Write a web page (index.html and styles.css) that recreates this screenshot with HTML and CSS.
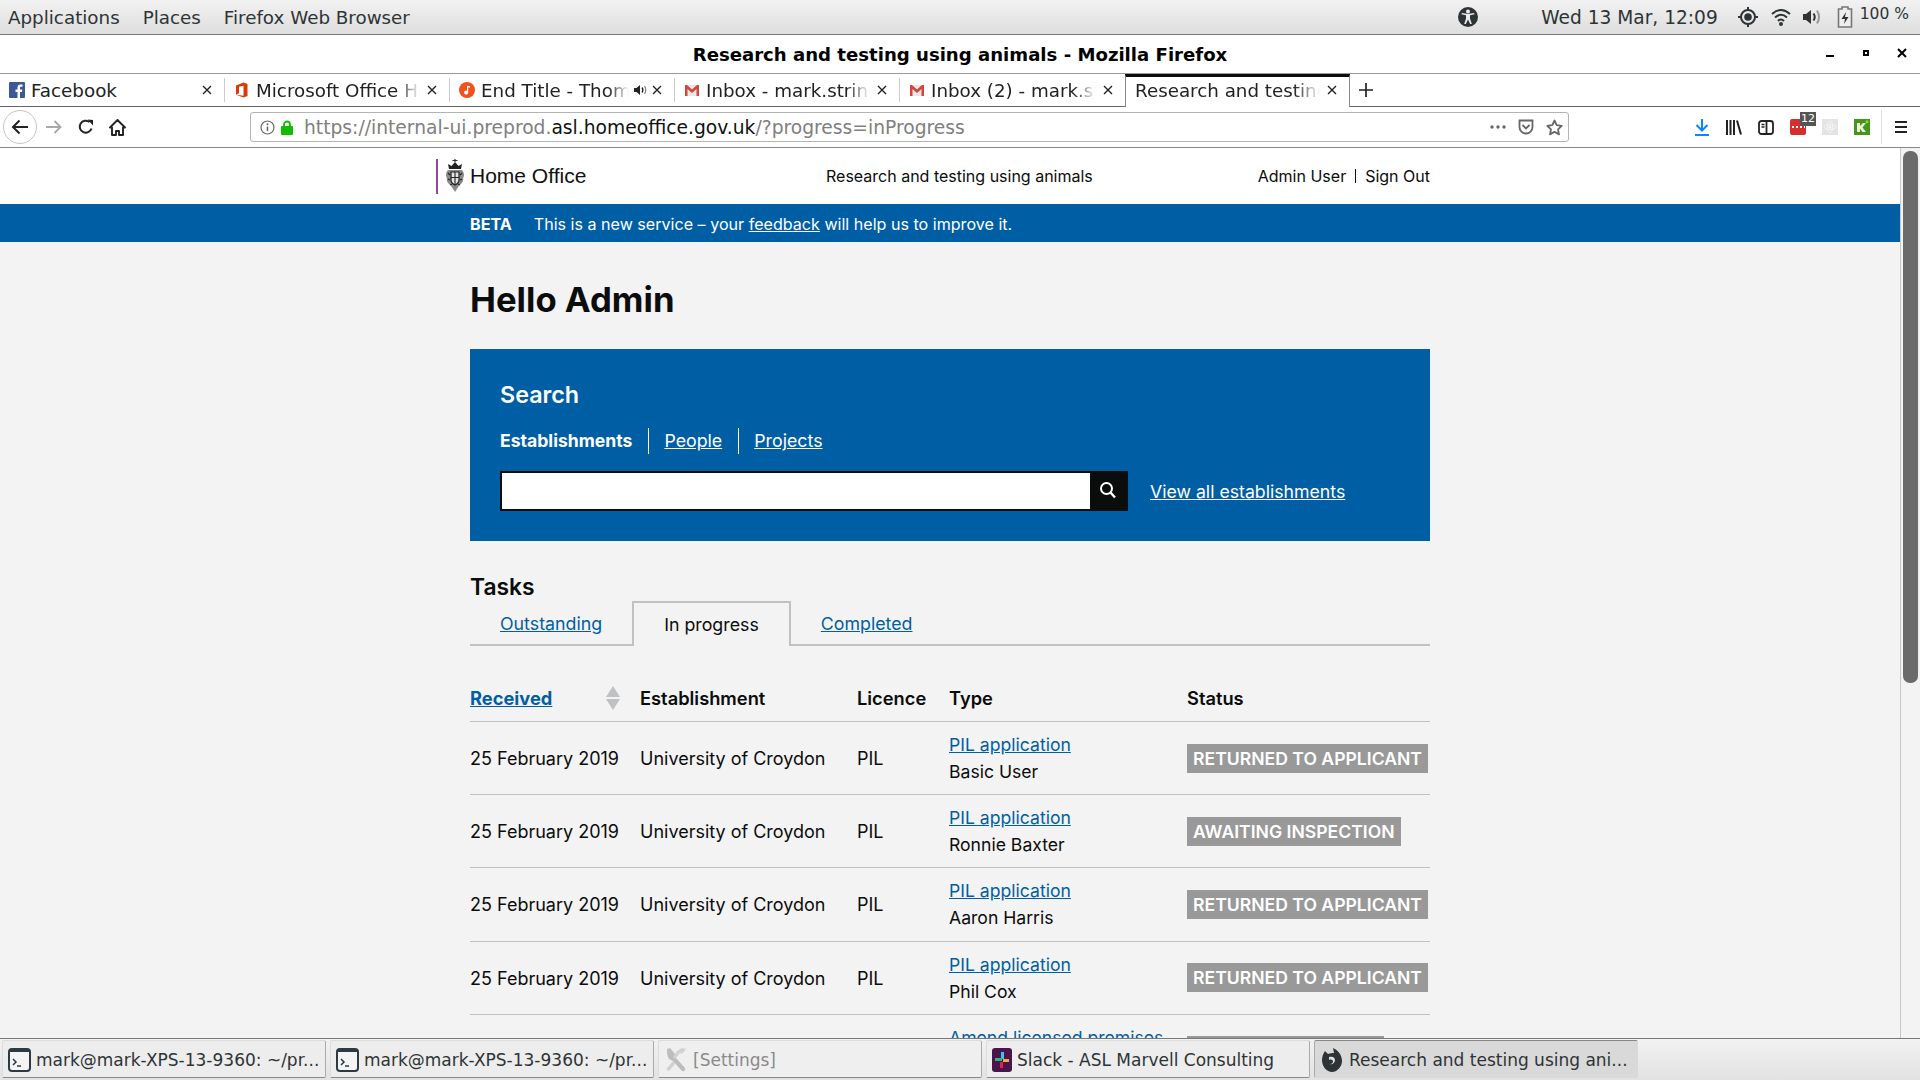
FILE: index.html
```html
<!DOCTYPE html>
<html lang="en">
<head>
<meta charset="utf-8">
<title>Research and testing using animals - Mozilla Firefox</title>
<link rel="stylesheet" href="styles.css">
</head>
<body>
<div class="desktop">
  <div class="panel">
    <div class="panel-menu"><span>Applications</span><span>Places</span><span>Firefox Web Browser</span></div>
    <div class="tray">
      <svg class="t-a11y" width="22" height="22" viewBox="0 0 22 22"><circle cx="11" cy="11" r="10" fill="#2e3436"/><circle cx="11" cy="5.6" r="2" fill="#eee"/><path d="M4.5 8.2 L9 9.3 V12.5 L7.2 18 H8.8 L11 13.5 L13.2 18 H14.8 L13 12.5 V9.3 L17.5 8.2 L17.2 7 L11 8 L4.8 7 Z" fill="#eee"/></svg>
      <span class="clock">Wed 13 Mar, 12:09</span>
      <svg class="t-loc" width="20" height="22" viewBox="0 0 20 22"><circle cx="10" cy="11" r="7" fill="none" stroke="#2e3436" stroke-width="2"/><circle cx="10" cy="11" r="3.8" fill="#2e3436"/><path d="M10 1v3M10 18v3M0 11h3M17 11h3" stroke="#2e3436" stroke-width="2"/></svg>
      <svg class="t-wifi" width="20" height="20" viewBox="0 0 20 20"><path d="M1 7 Q10 -1 19 7" fill="none" stroke="#2e3436" stroke-width="2"/><path d="M4 10.5 Q10 5 16 10.5" fill="none" stroke="#2e3436" stroke-width="2"/><path d="M7 14 Q10 11 13 14" fill="none" stroke="#2e3436" stroke-width="2"/><circle cx="10" cy="17" r="2" fill="#2e3436"/></svg>
      <svg class="t-vol" width="20" height="20" viewBox="0 0 20 20"><path d="M1 7h3l5-4v14l-5-4H1z" fill="#2e3436"/><path d="M11.5 6.5Q14 10 11.5 13.5" fill="none" stroke="#2e3436" stroke-width="2"/><path d="M15 3.5Q19 10 15 16.5" fill="none" stroke="#999" stroke-width="2"/></svg>
      <svg class="t-bat" width="16" height="22" viewBox="0 0 16 22"><path d="M5 1h6v2h3.5v18h-13V3H5z" fill="#eee" stroke="#777" stroke-width="1.6"/><path d="M9 6 4.5 13H8l-1 5 4.5-7H8z" fill="#2e3436"/></svg>
      <span class="battery">100 %</span>
    </div>
  </div>

  <div class="titlebar">
    <span class="title">Research and testing using animals - Mozilla Firefox</span>
    <div class="win-controls">
      <svg width="10" height="10" viewBox="0 0 10 10"><rect x="1" y="7" width="8" height="2" fill="#000"/></svg>
      <svg width="10" height="10" viewBox="0 0 10 10"><path d="M2 2h6v6H2z M4 4v2h2V4z" fill="#000" fill-rule="evenodd"/></svg>
      <svg width="10" height="10" viewBox="0 0 10 10"><path d="M1 1 9 9M9 1 1 9" stroke="#000" stroke-width="2"/></svg>
    </div>
  </div>

  <div class="tabstrip">
    <div class="tab"><div class="tab-in">
      <svg class="fav" width="16" height="16" viewBox="0 0 16 16"><rect width="16" height="16" rx="1" fill="#3b5998"/><path d="M11 16V10h2l.4-2.5H11V6c0-.8.3-1.2 1.2-1.2h1.3V2.5h-2C9.500 2.500 8.500 3.700 8.500 5.600v1.900H6.500V10h2v6z" fill="#fff"/></svg>
      <span class="tab-label">Facebook</span>
      <svg class="x" width="12" height="12" viewBox="0 0 12 12"><path d="M2 2l8 8M10 2l-8 8" stroke="#222" stroke-width="1.4"/></svg>
    </div></div>
    <div class="tab"><div class="tab-in">
      <svg class="fav" width="16" height="16" viewBox="0 0 16 16"><path d="M2 3.500 9.500 .5 13.500 2v12l-4 1.500L2 12.700l7.500 1V3.800L5 4.800v6.500L2 12.700z" fill="#d83b01"/></svg>
      <span class="tab-label fade">Microsoft Office Home</span>
      <svg class="x" width="12" height="12" viewBox="0 0 12 12"><path d="M2 2l8 8M10 2l-8 8" stroke="#222" stroke-width="1.4"/></svg>
    </div></div>
    <div class="tab"><div class="tab-in">
      <svg class="fav" width="16" height="16" viewBox="0 0 16 16"><circle cx="8" cy="8" r="8" fill="#f0521e"/><path d="M8 4h3v1.600H9.200v5a2 2 0 1 1-1.200-1.800z" fill="#fff"/></svg>
      <span class="tab-label fade">End Title - Thomas Newman</span>
      <svg class="speaker" width="14" height="14" viewBox="0 0 14 14"><path d="M0 5h2.500L6 2v10L2.500 9H0z" fill="#222"/><path d="M8 4.500Q9.800 7 8 9.500" fill="none" stroke="#222" stroke-width="1.300"/><path d="M10.500 3Q13 7 10.500 11" fill="none" stroke="#888" stroke-width="1.300"/></svg>
      <svg class="x x-tight" width="12" height="12" viewBox="0 0 12 12"><path d="M2 2l8 8M10 2l-8 8" stroke="#222" stroke-width="1.4"/></svg>
    </div></div>
    <div class="tab"><div class="tab-in">
      <svg class="fav" width="16" height="16" viewBox="0 0 16 16"><rect x="1" y="3" width="14" height="11" fill="#e8e8e8"/><path d="M1 14V3h2l5 4.500L13 3h2v11h-2.500V7L8 11 3.500 7v7z" fill="#d44638"/></svg>
      <span class="tab-label fade">Inbox - mark.stringer@</span>
      <svg class="x" width="12" height="12" viewBox="0 0 12 12"><path d="M2 2l8 8M10 2l-8 8" stroke="#222" stroke-width="1.4"/></svg>
    </div></div>
    <div class="tab"><div class="tab-in">
      <svg class="fav" width="16" height="16" viewBox="0 0 16 16"><rect x="1" y="3" width="14" height="11" fill="#e8e8e8"/><path d="M1 14V3h2l5 4.500L13 3h2v11h-2.500V7L8 11 3.500 7v7z" fill="#d44638"/></svg>
      <span class="tab-label fade">Inbox (2) - mark.stringer</span>
      <svg class="x" width="12" height="12" viewBox="0 0 12 12"><path d="M2 2l8 8M10 2l-8 8" stroke="#222" stroke-width="1.4"/></svg>
    </div></div>
    <div class="tab active"><div class="tab-in">
      <span class="tab-label fade">Research and testing using animals</span>
      <svg class="x" width="12" height="12" viewBox="0 0 12 12"><path d="M2 2l8 8M10 2l-8 8" stroke="#222" stroke-width="1.4"/></svg>
    </div></div>
    <svg class="plus" width="16" height="16" viewBox="0 0 16 16"><path d="M8 1v14M1 8h14" stroke="#222" stroke-width="1.7"/></svg>
  </div>

  <div class="navbar">
    <div class="nav-back"><svg width="18" height="16" viewBox="0 0 18 16"><path d="M17 8H2M8.500 1.500 2 8l6.500 6.500" fill="none" stroke="#222" stroke-width="2"/></svg></div>
    <div class="nav-btn"><svg width="16" height="14" viewBox="0 0 16 14"><path d="M0 7h14M8.500 1 14.500 7l-6 6" fill="none" stroke="#a8a8a8" stroke-width="1.800"/></svg></div>
    <div class="nav-btn"><svg width="16" height="16" viewBox="0 0 16 16"><path d="M13.500 9.500A6 6 0 1 1 11.500 3" fill="none" stroke="#222" stroke-width="2"/><path d="M9.500 .5 15 1v5.500z" fill="#222"/></svg></div>
    <div class="nav-btn"><svg width="17" height="17" viewBox="0 0 17 17"><path d="M8.500 1 1 8.500h2V16h4v-4h3v4h4V8.500h2z" fill="none" stroke="#222" stroke-width="1.900" stroke-linejoin="round"/></svg></div>
    <div class="urlbar">
      <svg class="u-info" width="15" height="15" viewBox="0 0 15 15"><circle cx="7.500" cy="7.500" r="6.500" fill="none" stroke="#666" stroke-width="1.200"/><path d="M7.500 6.500v4.500" stroke="#666" stroke-width="1.500"/><circle cx="7.500" cy="4.300" r="1" fill="#666"/></svg>
      <svg class="u-lock" width="12" height="15" viewBox="0 0 12 15"><path d="M3 6.500V4.500a3 3 0 0 1 6 0v2" fill="none" stroke="#12bc00" stroke-width="1.800"/><rect y="6" width="12" height="9" rx="1" fill="#12bc00"/></svg>
      <span class="url"><span class="dim">https://internal-ui.preprod.</span>asl.homeoffice.gov.uk<span class="dim">/?progress=inProgress</span></span>
      <div class="u-act"><svg width="16" height="4" viewBox="0 0 16 4"><circle cx="2" cy="2" r="1.700" fill="#666"/><circle cx="8" cy="2" r="1.700" fill="#666"/><circle cx="14" cy="2" r="1.700" fill="#666"/></svg></div>
      <div class="u-act"><svg width="16" height="16" viewBox="0 0 16 16"><path d="M1.500 1.500h13V8a6.500 6.500 0 0 1-13 0z" fill="none" stroke="#666" stroke-width="1.800"/><path d="M4.500 6 8 9.500 11.500 6" fill="none" stroke="#666" stroke-width="1.800"/></svg></div>
      <div class="u-act"><svg width="17" height="17" viewBox="0 0 17 17"><path d="M8.500 1.500l2.200 4.700 5 .6-3.700 3.500 1 5.100-4.500-2.600L4 15.400l1-5.100L1.300 6.800l5-.6z" fill="none" stroke="#666" stroke-width="1.800" stroke-linejoin="round"/></svg></div>
    </div>
    <div class="tool first"><svg width="16" height="17" viewBox="0 0 16 17"><path d="M8 0v11M2.500 6 8 11.500 13.500 6" fill="none" stroke="#0a84ff" stroke-width="2"/><path d="M1 16h14" stroke="#0a84ff" stroke-width="2"/></svg></div>
    <div class="tool"><svg width="16" height="15" viewBox="0 0 16 15"><path d="M1 0v15M4.500 0v15M8 0v15M11 .500 15 14.500" stroke="#222" stroke-width="2" fill="none"/></svg></div>
    <div class="tool"><svg width="16" height="15" viewBox="0 0 16 15"><rect x="1" y="1" width="14" height="13" rx="2.500" fill="none" stroke="#222" stroke-width="1.800"/><path d="M8.500 1v13" stroke="#222" stroke-width="1.800"/><path d="M3.500 4.500h3M3.500 7h3" stroke="#222" stroke-width="1.300"/></svg></div>
    <div class="tool ext">
      <svg width="16" height="16" viewBox="0 0 16 16"><rect width="16" height="16" rx="2" fill="#d32f2f"/><path d="M2 8h2M6 8h2M10 8h2M14 8h1" stroke="#fff" stroke-width="2"/></svg>
      <span class="badge12">12</span>
    </div>
    <div class="tool"><svg width="16" height="16" viewBox="0 0 16 16"><rect width="16" height="16" fill="#e4e4e4"/><ellipse cx="8" cy="8" rx="6" ry="2.500" fill="none" stroke="#f4f4f4"/><ellipse cx="8" cy="8" rx="2.500" ry="6" fill="none" stroke="#f4f4f4"/><circle cx="8" cy="8" r="1.500" fill="#f4f4f4"/></svg></div>
    <div class="tool"><svg width="16" height="16" viewBox="0 0 16 16"><rect width="16" height="16" fill="#46961e"/><path d="M3 4h3v3l3-3h3L8.500 8.500 12 13H8.500L6 9.500V13H3z" fill="#e8f5d8"/><circle cx="13" cy="2.700" r="1.500" fill="#7fe030"/></svg></div>
    <div class="tool-sep"></div>
    <div class="tool"><svg width="14" height="14" viewBox="0 0 14 14"><path d="M1 2h12M1 7h12M1 12h12" stroke="#222" stroke-width="2"/></svg></div>
  </div>

  <div class="viewport">
    <div class="page">
      <header class="site-head">
        <div class="site-head-in">
          <div class="logo">
            <svg class="crest" width="18" height="34" viewBox="0 0 18 34">
              <path d="M9 0v3M6.500 1.500h5" stroke="#333" stroke-width="1.200"/>
              <path d="M3 10 2 5l3.500 2L9 3l3.500 4L16 5l-1 5z" fill="#222"/>
              <path d="M2 11h14c2.500 3 2.500 6 1 8 1 3-1 6-3.500 7L9 33l-4.500-7C2 25 0 22 1 19c-1.500-2-1.500-5 1-8z" fill="#8a8a8a"/>
              <path d="M5 13h8v8c0 2.500-2 4-4 5-2-1-4-2.500-4-5z" fill="#e4e4e4" stroke="#222" stroke-width="1.200"/>
              <path d="M9 13v13M5 18.500h8M2 14l2 2M16 14l-2 2M2 20l2 1M16 20l-2 1M4 26l2-1M14 26l-2-1" stroke="#222" stroke-width="1.100"/>
            </svg>
            <span class="logo-text">Home Office</span>
          </div>
          <div class="service">Research and testing using animals</div>
          <div class="user"><span>Admin User</span><span class="user-sep">Sign Out</span></div>
        </div>
      </header>
      <div class="beta">
        <div class="beta-in"><strong>BETA</strong><span>This is a new service – your <a href="#">feedback</a> will help us to improve it.</span></div>
      </div>
      <main class="content">
        <h1>Hello Admin</h1>
        <section class="search">
          <h2>Search</h2>
          <div class="search-tabs">
            <span class="on">Establishments</span>
            <a class="people" href="#">People</a>
            <a href="#">Projects</a>
          </div>
          <div class="search-row">
            <div class="search-input"></div>
            <div class="search-btn"><svg width="18" height="18" viewBox="0 0 18 18"><circle cx="7.500" cy="7.500" r="5.500" fill="none" stroke="#fff" stroke-width="2"/><path d="M11.500 11.500 16 16.500" stroke="#fff" stroke-width="2.400"/></svg></div>
            <a class="view-all" href="#">View all establishments</a>
          </div>
        </section>
        <h2 class="tasks">Tasks</h2>
        <nav class="tabs">
          <a href="#">Outstanding</a>
          <span class="cur">In progress</span>
          <a href="#">Completed</a>
        </nav>
        <table>
          <thead>
            <tr>
              <th class="c1"><div class="sort"><a href="#">Received</a><svg width="14" height="24" viewBox="0 0 14 24"><path d="M7 0 14 11H0zM7 24 0 13h14z" fill="#bfc1c3"/></svg></div></th>
              <th class="c2">Establishment</th>
              <th class="c3">Licence</th>
              <th class="c4">Type</th>
              <th class="c5">Status</th>
            </tr>
          </thead>
          <tbody>
            <tr><td>25 February 2019</td><td>University of Croydon</td><td>PIL</td><td class="type"><a href="#">PIL application</a><br>Basic User</td><td class="stat"><span class="status">RETURNED TO APPLICANT</span></td></tr>
            <tr><td>25 February 2019</td><td>University of Croydon</td><td>PIL</td><td class="type"><a href="#">PIL application</a><br>Ronnie Baxter</td><td class="stat"><span class="status">AWAITING INSPECTION</span></td></tr>
            <tr><td>25 February 2019</td><td>University of Croydon</td><td>PIL</td><td class="type"><a href="#">PIL application</a><br>Aaron Harris</td><td class="stat"><span class="status">RETURNED TO APPLICANT</span></td></tr>
            <tr><td>25 February 2019</td><td>University of Croydon</td><td>PIL</td><td class="type"><a href="#">PIL application</a><br>Phil Cox</td><td class="stat"><span class="status">RETURNED TO APPLICANT</span></td></tr>
            <tr class="cut"><td></td><td></td><td></td><td class="type"><a href="#">Amend licensed premises</a></td><td class="stat"><span class="status-cut"></span></td></tr>
          </tbody>
        </table>
      </main>
    </div>
    <div class="scrollbar"><div class="thumb"></div></div>
  </div>

  <div class="taskbar">
    <div class="task">
      <svg width="23" height="24" viewBox="0 0 23 24"><rect x="1" y="1" width="21" height="22" rx="3" fill="#f4f4f4" stroke="#2e3a42" stroke-width="2"/><rect x="1" y="1" width="21" height="3" fill="#2e3a42"/><path d="M5 11l3 3-3 3M9 18h4" fill="none" stroke="#2e3a42" stroke-width="1.500"/></svg>
      <span>mark@mark-XPS-13-9360: ~/pr...</span>
    </div>
    <div class="task">
      <svg width="23" height="24" viewBox="0 0 23 24"><rect x="1" y="1" width="21" height="22" rx="3" fill="#f4f4f4" stroke="#2e3a42" stroke-width="2"/><rect x="1" y="1" width="21" height="3" fill="#2e3a42"/><path d="M5 11l3 3-3 3M9 18h4" fill="none" stroke="#2e3a42" stroke-width="1.500"/></svg>
      <span>mark@mark-XPS-13-9360: ~/pr...</span>
    </div>
    <div class="task off">
      <svg width="24" height="26" viewBox="0 0 24 26"><path d="M3 2 6 1l5 6 1 4 9 10c1 2-1 4-3 3L9 14 5 12C3 9 3 5 3 2z" fill="#bdbdbd"/><path d="M22 2l-4 5-2-1-5 6-2-2 4-6 5-3zM9 14l2.500 2.500-6 7c-2 1-3.500-1-2.500-2.500z" fill="#d2d2d2"/></svg>
      <span>[Settings]</span>
    </div>
    <div class="task">
      <svg width="20" height="24" viewBox="0 0 20 24"><rect width="20" height="24" rx="3" fill="#4a154b"/><rect x="9" y="4" width="3" height="7" fill="#36c5f0"/><rect x="3" y="10" width="7" height="3" fill="#2eb67d"/><rect x="11" y="11" width="6" height="3" fill="#ecb22e"/><rect x="8" y="14" width="3" height="6" fill="#e01e5a"/></svg>
      <span>Slack - ASL Marvell Consulting</span>
    </div>
    <div class="task active">
      <svg width="24" height="26" viewBox="0 0 24 26"><path d="M5 4 8 7c2-1 4-1 6-1l-1-5c5 2 9 7 9 13 0 6-5 11-10 11S2 20 2 13c0-3 1-6 3-9z" fill="#2e3436"/><path d="M9 10c3-1 6 0 6 3s-3 5-5 4c2 0 3-1 3-2.500S11 12 9 13z" fill="#e0e0e0"/></svg>
      <span>Research and testing using ani...</span>
    </div>
  </div>
</div>
</body>
</html>
```
FILE: styles.css
```css
* { box-sizing: border-box; }
html, body { margin: 0; padding: 0; height: 100%; overflow: hidden; }
body { font-family: "DejaVu Sans", sans-serif; background: #fff; color: #0b0c0c; }
.desktop { width: 1920px; height: 1080px; display: flex; flex-direction: column; overflow: hidden; }

.panel { height: 35px; flex: none; display: flex; align-items: center; background: linear-gradient(#f2f2f2, #dedede); border-bottom: 1px solid #777; color: #2e3436; font-size: 18.3px; }
.panel-menu { display: flex; gap: 23px; padding-left: 8px; }
.tray { margin-left: auto; display: flex; align-items: center; }
.t-a11y { margin-right: 62px; }
.clock { margin-right: 20px; font-size: 18.6px; }
.t-wifi { margin-left: 13px; }
.t-vol { margin-left: 11px; }
.t-bat { margin-left: 15px; }
.battery { font-size: 15.5px; margin: -6px 11px 0 7px; }

.titlebar { height: 39px; flex: none; display: flex; align-items: center; justify-content: center; position: relative; border-bottom: 1px solid #999; padding-top: 1px; }
.title { font-weight: 700; font-size: 18.1px; color: #000; }
.win-controls { position: absolute; right: 13px; top: 13px; display: flex; gap: 26px; }

.tabstrip { height: 33px; flex: none; display: flex; border-bottom: 1px solid #666; background: #fff; font-size: 18.3px; color: #222; }
.tab { width: 225px; height: 32px; padding: 4px 0; }
.tab-in { height: 24px; display: flex; align-items: center; padding: 0 11px 0 9px; border-right: 1px solid #ccc; }
.tab:nth-child(5) .tab-in { border-right: 0; }
.tab.active { height: 33px; background: #fff; border-top: 3px solid #0c0c0c; border-left: 1px solid #888; border-right: 1px solid #888; padding: 1px 0 0; }
.tab.active .tab-in { border: 0; padding: 0 11px 0 9px; }
.fav { flex: none; margin-right: 6px; }
.tab-label { flex: 1; min-width: 0; overflow: hidden; white-space: nowrap; }
.fade { -webkit-mask-image: linear-gradient(to right, #000 86%, transparent 100%); mask-image: linear-gradient(to right, #000 86%, transparent 100%); }
.speaker { flex: none; margin: 0 0 0 5px; }
.x { flex: none; margin-left: 6px; }
.x-tight { margin-left: 3px; }
.plus { margin: 8px 0 0 8px; }

.navbar { height: 41px; flex: none; display: flex; align-items: center; border-bottom: 1px solid #888; background: #fff; }
.nav-back { width: 34px; height: 34px; margin-left: 3px; margin-right: 1px; border: 1px solid #c4c4c4; border-radius: 50%; display: flex; align-items: center; justify-content: center; }
.nav-btn { width: 32px; display: flex; justify-content: center; }
.nav-btn:nth-child(4) { margin-left: -1px; margin-right: 1px; }
.urlbar { flex: none; margin-left: 116px; height: 30px; width: 1319px; border: 1px solid #b4b4b4; border-radius: 3px; display: flex; align-items: center; font-size: 18.7px; }
.u-info { margin-left: 9px; flex: none; }
.u-lock { margin-left: 6px; flex: none; }
.url { margin-left: 11px; color: #111; white-space: nowrap; flex: 1; }
.dim { color: #808080; }
.u-act { width: 28px; flex: none; display: flex; justify-content: center; }
.tool { width: 32px; flex: none; display: flex; justify-content: center; position: relative; }
.tool.first { margin-left: 117px; }
.tool-sep { width: 1px; height: 34px; background: #ddd; margin: 0 3px 0 3px; flex: none; }
.badge12 { position: absolute; right: -2px; top: -7px; width: 16px; height: 14px; background: #555; color: #fff; font-size: 11px; line-height: 14px; text-align: center; }

.viewport { flex: 1; min-height: 0; display: flex; background: #f3f3f3; overflow: hidden; }
.page { flex: 1; min-width: 0; font-family: Inter, sans-serif; font-size: 16px; line-height: 26px; color: #0b0c0c; }
.scrollbar { width: 20px; flex: none; background: #f3f3f3; border-left: 1px solid #c8c8c8; padding: 3px 2px 0 2px; }
.thumb { height: 532px; width: 15px; background: #6b6b6b; border-radius: 7px; }
a { color: #005ea5; }

.site-head { height: 56px; background: #fff; }
.site-head-in { width: 994px; margin-left: 436px; height: 100%; display: grid; grid-template-columns: 390px 1fr auto; align-items: center; }
.logo { height: 35px; display: flex; align-items: center; border-left: 2px solid #8f4a9e; padding-left: 8px; }
.logo-text { font-family: "Liberation Sans", sans-serif; font-size: 21px; margin-left: 6px; color: #111; }
.user-sep { border-left: 1px solid #0b0c0c; margin-left: 9px; padding-left: 9px; }
.user { display: flex; align-items: center; line-height: 14px; }

.beta { height: 38px; background: #005ea5; color: #fff; font-size: 16.1px; padding-top: 1px; }
.beta-in { width: 960px; margin: 0 auto; height: 100%; display: flex; align-items: center; gap: 22px; }
.beta-in strong { font-weight: 700; }
.beta a { color: #fff; }

.content { width: 960px; margin: 0 auto; padding-top: 35px; }
h1 { margin: 0; font-size: 34.7px; line-height: 44px; font-weight: 700; color: #0b0c0c; }
.search { margin-top: 28px; height: 192px; background: #005ea5; color: #fff; padding: 31px 30px 0; }
.search h2 { margin: 0; font-size: 23.3px; line-height: 30px; font-weight: 600; }
.search-tabs { display: flex; margin-top: 18px; font-size: 17.8px; }
.search-tabs > * { padding: 0 15px; border-left: 1px solid #fff; color: #fff; }
.search-tabs .on { padding-left: 0; padding-right: 16px; border-left: 0; font-weight: 700; font-size: 17.6px; }
.search-tabs .people { padding-right: 16px; }
.search-row { display: flex; align-items: center; margin-top: 17px; }
.search-input { width: 590px; height: 40px; background: #fff; border: 2px solid #0b0c0c; border-right: 0; }
.search-btn { width: 38px; height: 40px; background: #0b0c0c; display: flex; align-items: center; justify-content: center; padding: 0 2px 3px 0; }
.view-all { margin-left: 22px; margin-top: 2px; color: #fff; font-size: 17.7px; }

.tasks { margin: 31px 0 -1px; font-size: 22.8px; line-height: 30px; font-weight: 600; }
.tabs { display: flex; height: 45px; border-bottom: 2px solid #bfc1c3; font-size: 17.8px; line-height: 45px; }
.tabs a { padding: 0 30px; }
.tabs .cur { height: 45px; padding: 0 30px; border: 2px solid #bfc1c3; border-bottom: 0; background: #f3f3f3; line-height: 43px; }

table { width: 960px; margin-top: 29px; table-layout: fixed; border-collapse: collapse; font-size: 18px; }
th { text-align: left; font-weight: 600; font-size: 18.3px; padding: 10px 0; border-bottom: 1px solid #bfc1c3; }
td { padding: 11px 0 9px; border-bottom: 1px solid #bfc1c3; vertical-align: middle; line-height: 26px; }
td.type { font-size: 17.6px; padding: 9px 0; line-height: 27.1px; }
td.stat { padding: 10px 0; }
.c1 { width: 170px; } .c2 { width: 217px; } .c3 { width: 92px; } .c4 { width: 238px; } .c5 { width: 243px; }
.sort { width: 150px; display: flex; justify-content: space-between; align-items: center; }
.sort a { font-weight: 700; }
.status { display: inline-block; background: #999; color: #fff; font-weight: 600; font-size: 17.6px; padding: 0 6px; line-height: 29px; white-space: nowrap; }
.cut td { vertical-align: top; }
.status-cut { display: block; width: 197px; height: 29px; margin-top: 11px; background: #999; }

.taskbar { height: 42px; flex: none; display: flex; gap: 4px; padding: 1px 0 2px 2px; background: linear-gradient(#f2f2f2, #e2e2e2); border-top: 1px solid #777; font-size: 17px; color: #2e3436; }
.task { width: 324px; height: 38px; display: flex; align-items: center; gap: 5px; padding: 1px 5px 0; background: #ededed; border: 1px solid #dcdcdc; border-right-color: #aaa; border-bottom-color: #888; border-radius: 2px; white-space: nowrap; overflow: hidden; }
.task.off { color: #8a8a8a; background: #efefef; }
.task.active { background: #d9d9d9; border-color: #aaa #d9d9d9 #d9d9d9 #aaa; border-top-color: #888; }
```
